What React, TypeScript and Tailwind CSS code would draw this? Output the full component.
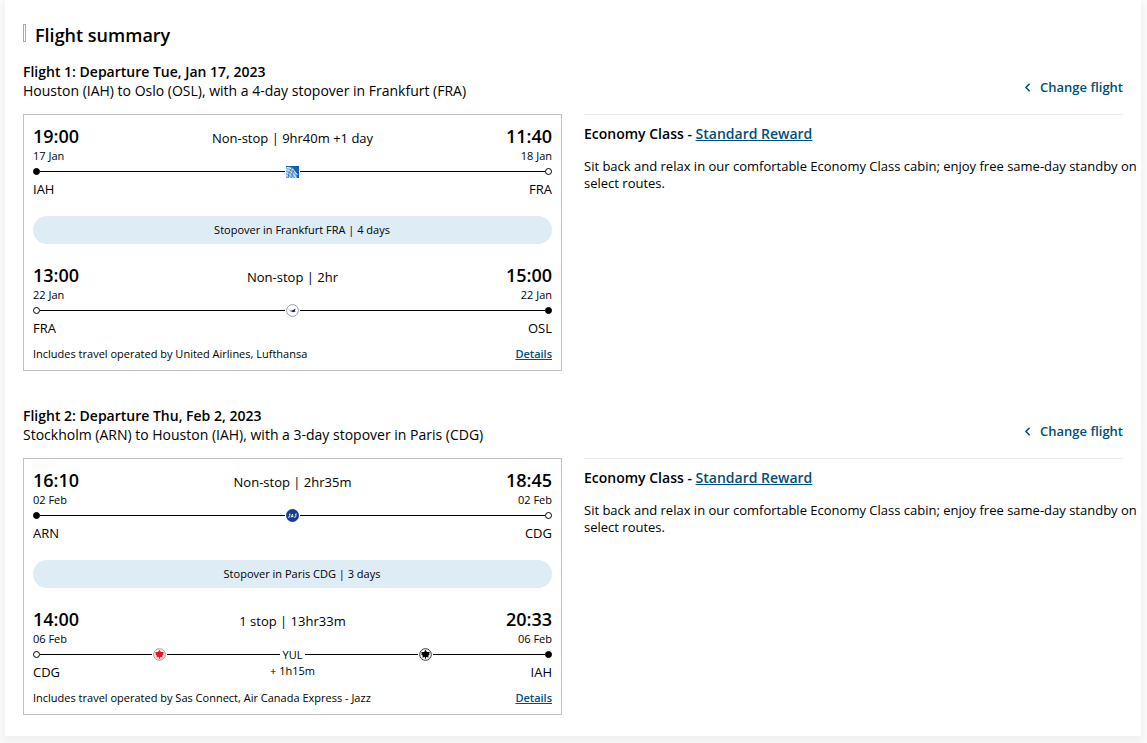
import { ChevronLeft } from "lucide-react";
import type { ReactNode } from "react";

type Stop = { time: string; date: string; code: string };

type Leg = {
  from: Stop;
  to: Stop;
  label: string;
  carriers: ReactNode[];
  via?: { code: string; wait: string };
};

type Flight = {
  title: string;
  route: string;
  legs: [Leg, Leg];
  stopover: string;
  operatedBy: string;
};

const leafPath =
  "M6.5 1.8 L7.9 4 L10.8 4 L10.2 5.6 L10.6 6.6 L9.2 7.8 L9.6 9.6 L7 9.1 L7 10.8 L6 10.8 L6 9.1 L3.4 9.6 L3.8 7.8 L2.4 6.6 L2.8 5.6 L2.2 4 L5.1 4 Z";

function UnitedIcon() {
  return (
    <svg width="13" height="12" viewBox="0 0 13 12" className="shrink-0" role="img" aria-label="United Airlines">
      <rect width="13" height="12" fill="#1261b0" />
      <path d="M0 1 Q5 0 8 3 Q11 7 11 12 L0 12 Z" fill="#7fabd8" />
      <g fill="none" stroke="#fff" strokeWidth="0.9">
        <path d="M0 3.5 Q6 4.5 10 12" />
        <path d="M1 1.5 Q7 2 11.5 9" />
        <path d="M0 6.5 Q5 7.5 7 12" />
        <path d="M0 9.5 Q3 10 4 12" />
      </g>
      <path d="M2 12 Q2 7 6 2 M6 12 Q5 8 8 4" fill="none" stroke="#1261b0" strokeWidth="0.7" />
    </svg>
  );
}

function LufthansaIcon() {
  return (
    <svg width="13" height="13" viewBox="0 0 13 13" className="shrink-0" role="img" aria-label="Lufthansa">
      <circle cx="6.5" cy="6.5" r="5.9" fill="#fff" stroke="#8b91a5" strokeWidth="0.9" />
      <path d="M2.3 5.3 L5 7" stroke="#a9afbf" strokeWidth="0.6" />
      <path d="M3.8 6.9 L6.6 6.3 L9.8 4.4 L8.9 6.2 L9.5 7.6 L7 8.3 L5.6 7.5 Z" fill="#12234f" />
    </svg>
  );
}

function SasIcon() {
  return (
    <svg width="13" height="13" viewBox="0 0 13 13" className="shrink-0" role="img" aria-label="SAS">
      <circle cx="6.5" cy="6.5" r="6.5" fill="#173b96" />
      <g fill="none" stroke="#fff" strokeWidth="0.8">
        <path d="M4.6 5 L3.4 5 L3.8 6.7 L3.4 8.2 L2 8.2" />
        <path d="M5 8.4 L6.6 5 L7 8.4 M5.6 7.3 L7 7.3" />
        <path d="M10.9 5 L9.5 5 L9.9 6.7 L9.5 8.2 L8.1 8.2" />
      </g>
    </svg>
  );
}

function AirCanadaIcon() {
  return (
    <svg width="13" height="13" viewBox="0 0 13 13" className="shrink-0" role="img" aria-label="Air Canada">
      <circle cx="6.5" cy="6.5" r="5.8" fill="#fff" stroke="#f2707c" strokeWidth="1" />
      <path d={leafPath} fill="#ee1128" />
    </svg>
  );
}

function JazzIcon() {
  return (
    <svg width="13" height="13" viewBox="0 0 13 13" className="shrink-0" role="img" aria-label="Air Canada Express - Jazz">
      <circle cx="6.5" cy="6.5" r="5.8" fill="#fff" stroke="#333" strokeWidth="1" />
      <path d={leafPath} fill="#000" />
    </svg>
  );
}

const flights: Flight[] = [
  {
    title: "Flight 1: Departure Tue, Jan 17, 2023",
    route: "Houston (IAH) to Oslo (OSL), with a 4-day stopover in Frankfurt (FRA)",
    stopover: "Stopover in Frankfurt FRA | 4 days",
    operatedBy: "Includes travel operated by United Airlines, Lufthansa",
    legs: [
      {
        from: { time: "19:00", date: "17 Jan", code: "IAH" },
        to: { time: "11:40", date: "18 Jan", code: "FRA" },
        label: "Non-stop | 9hr40m +1 day",
        carriers: [<UnitedIcon />],
      },
      {
        from: { time: "13:00", date: "22 Jan", code: "FRA" },
        to: { time: "15:00", date: "22 Jan", code: "OSL" },
        label: "Non-stop | 2hr",
        carriers: [<LufthansaIcon />],
      },
    ],
  },
  {
    title: "Flight 2: Departure Thu, Feb 2, 2023",
    route: "Stockholm (ARN) to Houston (IAH), with a 3-day stopover in Paris (CDG)",
    stopover: "Stopover in Paris CDG | 3 days",
    operatedBy: "Includes travel operated by Sas Connect, Air Canada Express - Jazz",
    legs: [
      {
        from: { time: "16:10", date: "02 Feb", code: "ARN" },
        to: { time: "18:45", date: "02 Feb", code: "CDG" },
        label: "Non-stop | 2hr35m",
        carriers: [<SasIcon />],
      },
      {
        from: { time: "14:00", date: "06 Feb", code: "CDG" },
        to: { time: "20:33", date: "06 Feb", code: "IAH" },
        label: "1 stop | 13hr33m",
        carriers: [<AirCanadaIcon />, <JazzIcon />],
        via: { code: "YUL", wait: "+ 1h15m" },
      },
    ],
  },
];

function Dot({ filled }: { filled: boolean }) {
  return (
    <span className={`size-[7px] shrink-0 rounded-full border border-black ${filled ? "bg-black" : "bg-white"}`} />
  );
}

function Line() {
  return <span className="h-px flex-1 bg-black" />;
}

function LegRow({ leg, last }: { leg: Leg; last?: boolean }) {
  return (
    <div>
      <div className="flex items-center justify-between text-[18px] leading-[23px] font-semibold">
        <span>{leg.from.time}</span>
        <span className="pt-1 text-[13px] leading-[19px] font-normal">{leg.label}</span>
        <span>{leg.to.time}</span>
      </div>
      <div className="flex justify-between text-[11px] leading-4">
        <span>{leg.from.date}</span>
        <span>{leg.to.date}</span>
      </div>

      {/* Timeline */}
      <div className="flex h-[15px] items-center">
        <Dot filled={!last} />
        <Line />
        <span className="px-px">{leg.carriers[0]}</span>
        <Line />
        {leg.via && (
          <>
            <span className="px-[3px] text-[11px] leading-4">{leg.via.code}</span>
            <Line />
            <span className="px-px">{leg.carriers[1]}</span>
            <Line />
          </>
        )}
        <Dot filled={!!last} />
      </div>

      <div className="grid grid-cols-3 pt-0.5 text-[13px] leading-[17px]">
        <span>{leg.from.code}</span>
        <span className="text-center text-[11px] leading-[14px]">{leg.via?.wait}</span>
        <span className="text-right">{leg.to.code}</span>
      </div>
    </div>
  );
}

function FlightSection({ flight }: { flight: Flight }) {
  return (
    <section className="grid grid-cols-2 gap-x-[22px]">
      <div className="h-[52px] text-[14px] leading-[19px] whitespace-nowrap">
        <h2 className="font-semibold">{flight.title}</h2>
        <p>{flight.route}</p>
      </div>
      <div className="flex items-center justify-end pb-0.5">
        <button className="flex items-center gap-1.5 text-[13px] leading-5 font-semibold text-[#004f7a]">
          <ChevronLeft size={13} strokeWidth={3} />
          Change flight
        </button>
      </div>

      {/* Itinerary */}
      <div className="border border-[#bfc1c4] px-[9px] pt-2.5 pb-2">
        <LegRow leg={flight.legs[0]} />
        <div className="mt-[18px] mb-5 rounded-full bg-[#deecf5] py-1.5 pl-[19px] text-center text-[11px] leading-4">
          {flight.stopover}
        </div>
        <LegRow leg={flight.legs[1]} last />
        <div className="mt-[9px] flex justify-between text-[11px] leading-4">
          <span>{flight.operatedBy}</span>
          <a href="#details" className="font-semibold text-[#004f7a] underline">
            Details
          </a>
        </div>
      </div>

      {/* Cabin */}
      <div className="border-t border-[#e9eaeb] pt-[9px]">
        <h3 className="text-[14px] leading-5 font-semibold">
          Economy Class -{" "}
          <a href="#fare" className="text-[#004f7a] underline">
            Standard Reward
          </a>
        </h3>
        <p className="mt-3.5 -mr-4 text-[13px] leading-[17px]">
          Sit back and relax in our comfortable Economy Class cabin; enjoy free same-day standby on select routes.
        </p>
      </div>
    </section>
  );
}

export default function App() {
  return (
    <div className="overflow-hidden bg-white pr-1.5 pb-[7px] pl-[5px] font-['Open_Sans',sans-serif] text-black">
      <main className="bg-white px-[18px] pt-6 pb-[21px] shadow-[0_5px_10px_5px_#f2f2f2]">
        <div className="mb-4 flex items-start gap-[9px]">
          <span className="h-[18px] w-[3px] border border-[#b9a590]" />
          <h1 className="text-[18px] leading-[22px] font-semibold">Flight summary</h1>
        </div>
        <div className="flex flex-col gap-[35px]">
          {flights.map((flight) => (
            <FlightSection key={flight.title} flight={flight} />
          ))}
        </div>
      </main>
    </div>
  );
}
